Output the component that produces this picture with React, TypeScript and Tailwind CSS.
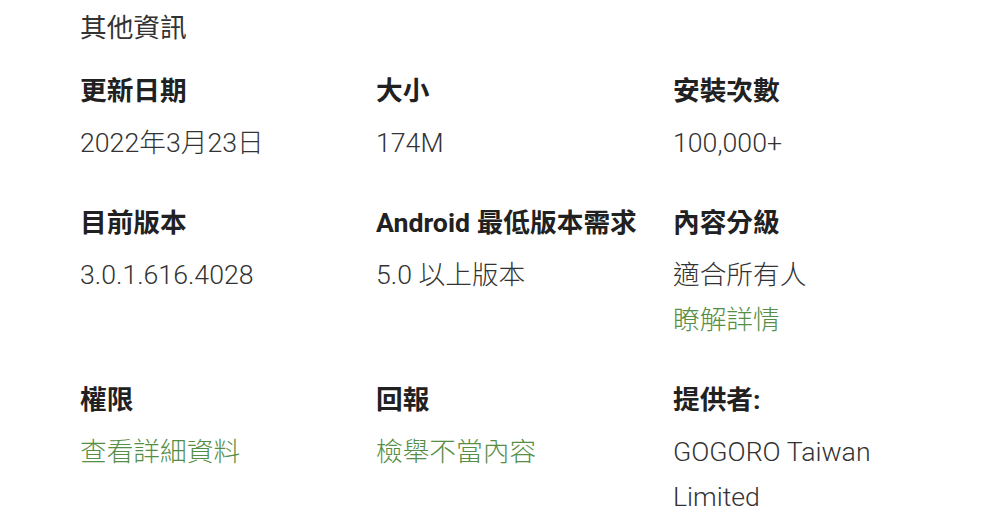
import React from "react";

type Item = { label: string; lines: { text: string; link?: boolean }[] };

const rows: Item[][] = [
  [
    { label: "更新日期", lines: [{ text: "2022年3月23日" }] },
    { label: "大小", lines: [{ text: "174M" }] },
    { label: "安裝次數", lines: [{ text: "100,000+" }] },
  ],
  [
    { label: "目前版本", lines: [{ text: "3.0.1.616.4028" }] },
    { label: "Android 最低版本需求", lines: [{ text: "5.0 以上版本" }] },
    { label: "內容分級", lines: [{ text: "適合所有人" }, { text: "瞭解詳情", link: true }] },
  ],
  [
    { label: "權限", lines: [{ text: "查看詳細資料", link: true }] },
    { label: "回報", lines: [{ text: "檢舉不當內容", link: true }] },
    { label: "提供者:", lines: [{ text: "GOGORO Taiwan" }, { text: "Limited" }] },
  ],
];

export default function App() {
  return (
    <div
      className="w-[1000px] h-[526px] bg-white overflow-hidden pl-[80px]"
      style={{ fontFamily: 'Roboto, "Noto Sans CJK TC", sans-serif' }}
    >
      <div className="pt-[11px] text-[26.7px] leading-[34px] text-[#333333]">其他資訊</div>
      <div className="mt-[29px] flex flex-col gap-[40px]">
        {rows.map((row, i) => (
          <div key={i} className="grid grid-cols-[296px_297px_1fr]">
            {row.map((item) => (
              <div key={item.label}>
                <div className="text-[26.7px] leading-[34px] font-bold text-[#212121] whitespace-nowrap">
                  {item.label}
                </div>
                <div className="mt-[13px]">
                  {item.lines.map((l) => (
                    <div
                      key={l.text}
                      className={
                        "text-[26.7px] leading-[45px] font-light " +
                        (l.link ? "text-[#558e45]" : "text-[#333333]")
                      }
                    >
                      {l.text}
                    </div>
                  ))}
                </div>
              </div>
            ))}
          </div>
        ))}
      </div>
    </div>
  );
}
